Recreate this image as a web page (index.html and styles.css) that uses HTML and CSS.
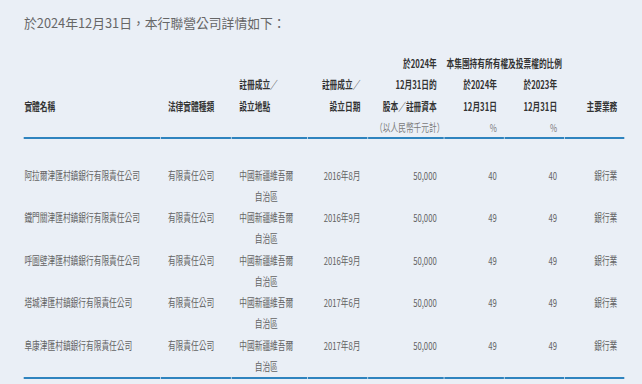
FILE: index.html
```html
<!DOCTYPE html>
<html lang="zh-Hant">
<head>
<meta charset="utf-8">
<title>聯營公司詳情</title>
<link rel="stylesheet" href="styles.css">
</head>
<body>
<div class="page">
  <p class="title">於2024年12月31日，本行聯營公司詳情如下：</p>
  <div class="table-wrap">
    <table class="grid">
      <colgroup>
        <col class="c1"><col class="c2"><col class="c3"><col class="c4">
        <col class="c5"><col class="c6"><col class="c7"><col class="c8">
      </colgroup>
      <thead>
        <tr>
          <th></th><th></th><th></th><th></th>
          <th class="r">於2024年</th>
          <th colspan="2" class="span">本集團持有所有權及投票權的比例</th>
          <th></th>
        </tr>
        <tr>
          <th></th><th></th>
          <th class="l pl">註冊成立／</th>
          <th class="r">註冊成立／</th>
          <th class="r">12月31日的</th>
          <th class="r">於2024年</th>
          <th class="r">於2023年</th>
          <th></th>
        </tr>
        <tr>
          <th class="l first">實體名稱</th>
          <th class="l">法律實體種類</th>
          <th class="l pl">設立地點</th>
          <th class="r">設立日期</th>
          <th class="r">股本／註冊資本</th>
          <th class="r">12月31日</th>
          <th class="r">12月31日</th>
          <th class="r">主要業務</th>
        </tr>
        <tr class="units">
          <th></th><th></th><th></th><th></th>
          <th class="r">（以人民幣千元計）</th>
          <th class="r">%</th>
          <th class="r">%</th>
          <th></th>
        </tr>
      </thead>
      <tbody>
        <tr>
          <td class="l first">阿拉爾津匯村鎮銀行有限責任公司</td>
          <td class="l">有限責任公司</td>
          <td class="l pl"><span class="place">中國新疆維吾爾<br>自治區</span></td>
          <td class="r">2016年8月</td>
          <td class="r">50,000</td>
          <td class="r">40</td>
          <td class="r">40</td>
          <td class="r">銀行業</td>
        </tr>
        <tr>
          <td class="l first">鐵門關津匯村鎮銀行有限責任公司</td>
          <td class="l">有限責任公司</td>
          <td class="l pl"><span class="place">中國新疆維吾爾<br>自治區</span></td>
          <td class="r">2016年9月</td>
          <td class="r">50,000</td>
          <td class="r">49</td>
          <td class="r">49</td>
          <td class="r">銀行業</td>
        </tr>
        <tr>
          <td class="l first">呼圖壁津匯村鎮銀行有限責任公司</td>
          <td class="l">有限責任公司</td>
          <td class="l pl"><span class="place">中國新疆維吾爾<br>自治區</span></td>
          <td class="r">2016年9月</td>
          <td class="r">50,000</td>
          <td class="r">49</td>
          <td class="r">49</td>
          <td class="r">銀行業</td>
        </tr>
        <tr>
          <td class="l first">塔城津匯村鎮銀行有限責任公司</td>
          <td class="l">有限責任公司</td>
          <td class="l pl"><span class="place">中國新疆維吾爾<br>自治區</span></td>
          <td class="r">2017年6月</td>
          <td class="r">50,000</td>
          <td class="r">49</td>
          <td class="r">49</td>
          <td class="r">銀行業</td>
        </tr>
        <tr>
          <td class="l first">阜康津匯村鎮銀行有限責任公司</td>
          <td class="l">有限責任公司</td>
          <td class="l pl"><span class="place">中國新疆維吾爾<br>自治區</span></td>
          <td class="r">2017年8月</td>
          <td class="r">50,000</td>
          <td class="r">49</td>
          <td class="r">49</td>
          <td class="r">銀行業</td>
        </tr>
      </tbody>
    </table>
  </div>
</div>
</body>
</html>
```
FILE: styles.css
```css
html, body {
  margin: 0;
  background: #eaeff6;
  overflow: hidden;
}
body {
  font-family: "Noto Sans CJK TC", "Noto Sans", sans-serif;
}
.page {
  padding: 12.5px 0 0 23px;
}
.title {
  margin: 0;
  padding-left: 1px;
  font-size: 12.8px;
  line-height: 20px;
  color: #666;
  font-weight: normal;
}
.table-wrap {
  width: 602px;
  overflow: hidden;
  margin-top: 20px;
}
.grid {
  width: 860px;
  table-layout: fixed;
  border-collapse: separate;
  border-spacing: 1px 0;
  transform: scaleX(0.7);
  transform-origin: 0 0;
  font-size: 11px;
}
.c1 { width: 195px; }
.c2 { width: 100px; }
.c3 { width: 108px; }
.c4 { width: 85px; }
.c5 { width: 108px; }
.c6 { width: 85px; }
.c7 { width: 85px; }
.c8 { width: 85px; }

.grid th, .grid td {
  padding: 0 10px;
  white-space: nowrap;
}
.grid th {
  line-height: 21.5px;
  font-weight: bold;
  color: #333;
  vertical-align: bottom;
}
.grid .l { text-align: left; }
.grid .r { text-align: right; }
.grid .first { padding-left: 1px; }
.grid .pl { padding-left: 11px; }
.grid .span {
  text-align: center;
  padding: 0;
}
.units th {
  line-height: 20px;
  font-weight: normal;
  color: #7a7a7a;
  border-bottom: 2px solid #2f84bf;
}
.grid td {
  line-height: 21.25px;
  vertical-align: top;
  color: #636363;
}
.grid tbody tr:first-child td {
  padding-top: 25.5px;
}
.grid tbody tr:last-child td {
  border-bottom: 2px solid #2f84bf;
}
.place {
  display: inline-block;
  text-align: center;
}
```
